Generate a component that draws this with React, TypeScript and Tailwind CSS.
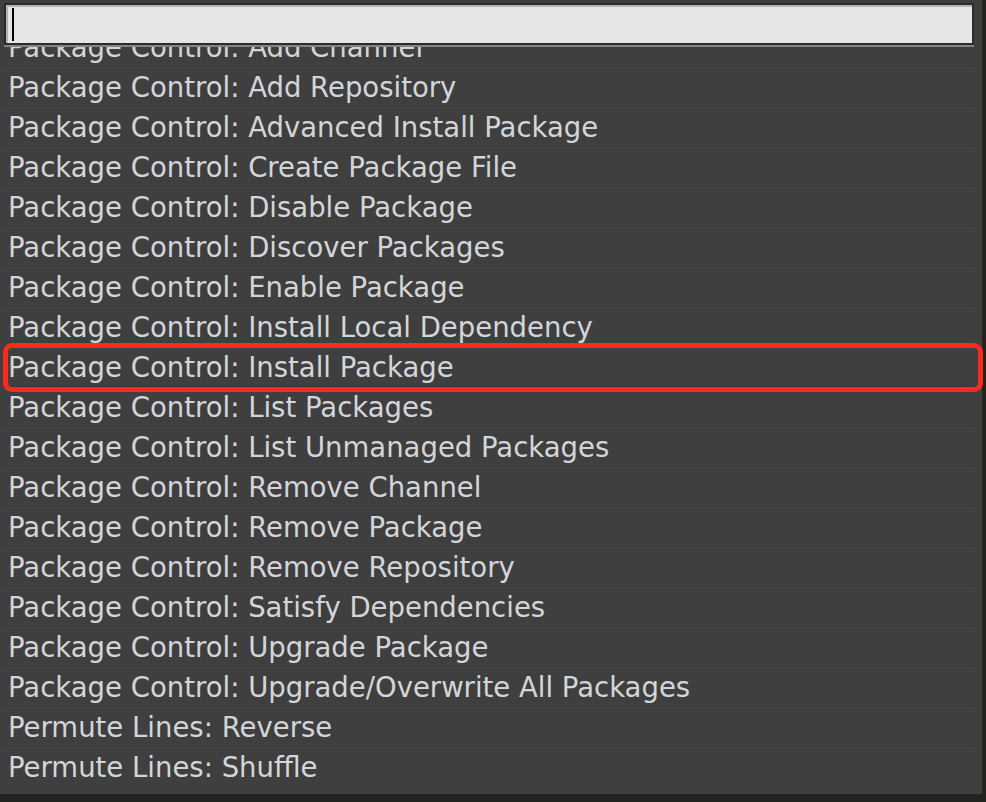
const items = [
  "Package Control: Add Channel",
  "Package Control: Add Repository",
  "Package Control: Advanced Install Package",
  "Package Control: Create Package File",
  "Package Control: Disable Package",
  "Package Control: Discover Packages",
  "Package Control: Enable Package",
  "Package Control: Install Local Dependency",
  "Package Control: Install Package",
  "Package Control: List Packages",
  "Package Control: List Unmanaged Packages",
  "Package Control: Remove Channel",
  "Package Control: Remove Package",
  "Package Control: Remove Repository",
  "Package Control: Satisfy Dependencies",
  "Package Control: Upgrade Package",
  "Package Control: Upgrade/Overwrite All Packages",
  "Permute Lines: Reverse",
  "Permute Lines: Shuffle",
];

export default function App() {
  return (
    <div className="w-[986px] h-[802px] bg-[#24241f] overflow-hidden font-['DejaVu_Sans',sans-serif]">
      <div className="relative w-[982px] h-[794px] bg-[#3f3f3f] flex flex-col">
        {/* search box */}
        <div className="pt-[3px] pl-[4px]">
          <div className="w-[970px] h-[42px] border-2 border-[#2b2b2b] bg-[#e6e6e6] shadow-[inset_2px_2px_0_#b4b4b4] flex items-center pl-[6px]">
            <div className="w-[2px] h-[33px] bg-black" />
          </div>
          <div className="w-[970px] h-[2px] bg-[#858585]" />
        </div>

        {/* results, scrolled so the first one is half hidden */}
        <div className="flex-1 overflow-hidden">
          <div className="-mt-[19px]">
            {items.map((label, i) => (
              <div key={label}>
                <div className="h-[38px] flex items-center pl-[8px] pt-[2px] text-[27.5px] text-[#d3d6d9] whitespace-nowrap">
                  {label}
                </div>
                {i < items.length - 1 && (
                  <div className="ml-[4px] w-[970px]">
                    <div className="h-px bg-[#333333]" />
                    <div className="h-px bg-[#4a4a4a]" />
                  </div>
                )}
              </div>
            ))}
          </div>
        </div>

        {/* highlight annotation */}
        <div className="absolute left-[3px] top-[343px] w-[980px] h-[49px] border-[5px] border-[#fb2a1e] rounded-[9px]" />
      </div>
    </div>
  );
}
